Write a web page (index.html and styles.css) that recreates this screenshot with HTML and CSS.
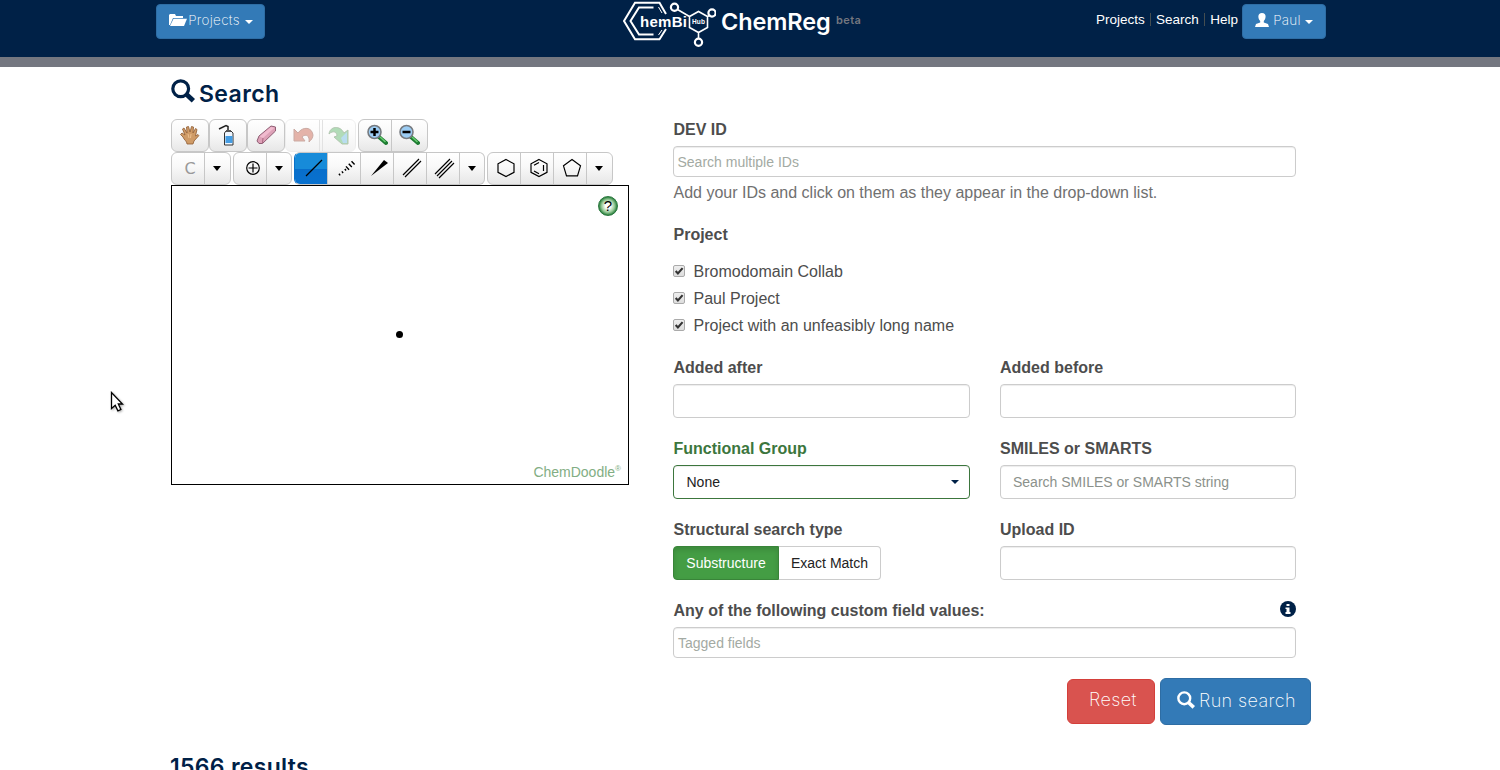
FILE: index.html
```html
<!DOCTYPE html>
<html lang="en">
<head>
<meta charset="utf-8">
<title>ChemReg Search</title>
<link rel="stylesheet" href="styles.css">
</head>
<body>
<svg class="defs" width="0" height="0">
  <defs>
    <symbol id="search" viewBox="0 0 24 24"><circle cx="9.7" cy="9.7" r="7.9" fill="none" stroke="currentColor" stroke-width="3.2"/><path d="M15 15l2-1.500 7 6.500-3.300 3.600-7-6.500z" fill="currentColor"/></symbol>
    <symbol id="lens" viewBox="0 0 22 22"><path d="M13 13l7 6" stroke="#1e7c32" stroke-width="4" stroke-linecap="round"/><path d="M14 13l5.500 5" stroke="#68cc70" stroke-width="1.500"/><circle cx="8.500" cy="8" r="6.500" fill="#9ccdf4" stroke="#777b80" stroke-width="1.600"/></symbol>
  </defs>
</svg>
<header class="header">
  <div class="header-inner">
    <button class="btn btn-projects"><svg class="folder" viewBox="0 0 18 14"><path d="M0 12V2l1-1h5l1 2h7v2H4L1 12z" fill="#fff"/><path d="M4.500 5.800H18L15 13H1z" fill="#fff"/></svg><span>Projects</span><i class="caret"></i></button>
    <div class="brand">
      <svg class="logo" viewBox="0 0 94 48" fill="none" stroke="#fff">
        <path d="M44 14L37.500 2.800H13L2 21l11 18.200h24.500L44 29" stroke-width="2"/>
        <path d="M31.500 7.500H17L8.500 21 17 34.500h14.500" stroke-width="2"/>
        <path d="M36.500 7l3.500 6M40 30l-3.500 5" stroke-width="1"/>
        <path d="M55.500 9.500L67.500 16.500v11l9 5 9-5v-11l-9-5-9 5M85.500 16.500l3-1.500M76.500 32.500v6" stroke-width="1.600"/>
        <circle cx="52.500" cy="7.300" r="3.600" stroke-width="2.200"/><circle cx="90" cy="13" r="3.600" stroke-width="2.200"/><circle cx="76.500" cy="42.300" r="3.600" stroke-width="2.200"/>
        <text class="logo-main" x="18" y="27" textLength="47">hemBi</text><text class="logo-hub" x="70" y="24" textLength="13">Hub</text>
      </svg>
      <span class="brand-name">ChemReg</span><span class="beta">beta</span>
    </div>
    <nav class="nav"><a>Projects</a><a>Search</a><a>Help</a></nav>
    <button class="btn btn-user"><svg class="person" viewBox="0 0 14 14"><path d="M7 0c5 0 4 6 1.800 8v1.500L13 11l1 3H0l1-3 4.200-1.500V8C3 6 2 0 7 0z" fill="#fff"/></svg><span>Paul</span><i class="caret"></i></button>
  </div>
</header>

<main class="page">
  <section class="sketch-column">
    <h1 class="title"><svg class="title-icon"><use href="#search"/></svg><span>Search</span></h1>
    <div class="toolbar toolbar-top">
      <div class="tools"><div class="tool w36"><svg width="22" height="22" viewBox="0 0 22 22"><path d="M8 20c0-3-3-4-4-7l-2.500-2.500L3 9l3 2-2.500-6L5 4l3 5-.500-6 2-.500L11 8l1.500-5.500 2 .500L14 9l2.500-4.500L18 5.500 16.500 12l2.500-1.500.800 1.200L15 17l-1 3z" fill="#cf9b67" stroke="#8e5b31" stroke-width=".8"/><path d="M9 10l1 4M12 10l-.5 4" stroke="#edc08e"/></svg></div></div>
      <div class="tools"><div class="tool w36"><svg class="bottle" width="22" height="22" viewBox="0 0 22 22"><path d="M1 5l7-3.500 2 1V7" fill="none" stroke="#222" stroke-width="1.500"/><path d="M8 7h5l2 2v12H6.500V9z" fill="#eef6ff" stroke="#333"/><path d="M7.500 12h7v7h-7z" fill="#459de3"/><path d="M8 7h5" stroke="#555" stroke-width="2"/></svg></div></div>
      <div class="tools"><div class="tool w36"><svg width="22" height="22" viewBox="0 0 22 22"><path d="M2 17l2-5L16 2l4.500 1v4L7.500 19.500H4z" fill="#dda1b7" stroke="#8f5e74"/><path d="M4.500 12.500L16 3l3.500.700L8 14z" fill="#f1bbcf"/><path d="M8 14l-.500 5" stroke="#aa6680"/></svg></div></div>
      <div class="tools disabled"><div class="tool w33"><svg width="22" height="22" viewBox="0 0 22 22"><path d="M2 5l4 4c5-7 14-6 15 2 0 3-2 5-4 7 1-6-3-9-7-5l3 4H2z" fill="#ca6a55" stroke="#97584a"/></svg></div><div class="tool w36"><svg width="22" height="22" viewBox="0 0 22 22"><path d="M20 6l-4 3C12 1 2 2 1 10c4-4 8-2 8 2l-3 1 8 7h6z" fill="#66b872" stroke="#668d62"/><path d="M13 14l6-6v11h-4z" fill="#76bce0"/></svg></div></div>
      <div class="tools"><div class="tool w32"><svg class="zoom-in" width="22" height="22" viewBox="0 0 22 22"><use href="#lens"/><path d="M4.500 8h8M8.500 4v8" stroke="#000" stroke-width="2.500"/></svg></div><div class="tool w36"><svg class="zoom-out" width="22" height="22" viewBox="0 0 22 22"><use href="#lens"/><path d="M4.500 8h8" stroke="#000" stroke-width="2.500"/></svg></div></div>
    </div>
    <div class="toolbar toolbar-bottom">
      <div class="tools"><div class="tool w32 element">C</div><div class="tool w26"><i class="tool-caret"></i></div></div>
      <div class="tools"><div class="tool w32 plus"><svg width="20" height="20" viewBox="0 0 20 20"><circle cx="10" cy="10" r="6.300"/><path d="M5.500 10h9M10 5.500v9"/></svg></div><div class="tool w25"><i class="tool-caret"></i></div></div>
      <div class="tools bonds"><div class="tool w32 selected"><svg class="off" width="22" height="22"><path d="M3 19L19 3"/></svg></div><div class="tool w33"><svg class="off" width="22" height="22"><path class="dash" d="M3 18L11 11.500"/><path class="dash thick" d="M11 11.500L19 4"/></svg></div><div class="tool w33"><svg class="off" width="22" height="22"><path class="fill" d="M2 19L15 3l4 3z"/></svg></div><div class="tool w33"><svg class="double" width="22" height="22"><path d="M2 18L18 2M4 20L20 4"/></svg></div><div class="tool w33"><svg class="double" width="22" height="22"><path d="M1 17L16 2M3 19L18 4M5 21L20 6"/></svg></div><div class="tool w25"><i class="tool-caret"></i></div></div>
      <div class="tools rings"><div class="tool w32"><svg class="ring" width="22" height="22"><path d="M11 2.500l8 4.300v8.600L11 19.500l-8-4.100V6.800z"/></svg></div><div class="tool w33"><svg class="ring" width="22" height="22"><path d="M11 2.500l8 4.300v8.600L11 19.500l-8-4.100V6.800zM6 8.300l5-2.800M15.500 8v6M11 16.700l-5-2.800"/></svg></div><div class="tool w33"><svg class="ring" width="22" height="22"><path d="M11 2.500l8.500 6.300-3 10h-11l-3-10z"/></svg></div><div class="tool w26"><i class="tool-caret"></i></div></div>
    </div>
    <div class="canvas"><span class="help-icon">?</span><i class="atom"></i><span class="credit">ChemDoodle<sup>®</sup></span></div>
    <h2 class="results">1566 results</h2>
  </section>

  <section class="form">
    <label class="label">DEV ID</label>
    <div class="input short">Search multiple IDs</div>
    <p class="hint">Add your IDs and click on them as they appear in the drop-down list.</p>
    <div class="label">Project</div>
    <div class="checks">
      <label><i class="check"><svg viewBox="0 0 12 12"><path d="M2 6l2.700 3L10.300 2.500"/></svg></i>Bromodomain Collab</label>
      <label><i class="check"><svg viewBox="0 0 12 12"><path d="M2 6l2.700 3L10.300 2.500"/></svg></i>Paul Project</label>
      <label><i class="check"><svg viewBox="0 0 12 12"><path d="M2 6l2.700 3L10.300 2.500"/></svg></i>Project with an unfeasibly long name</label>
    </div>
    <div class="grid">
      <div><div class="label">Added after</div><div class="input"></div></div>
      <div><div class="label">Added before</div><div class="input"></div></div>
      <div><div class="label green">Functional Group</div><div class="input select">None<i class="caret"></i></div></div>
      <div><div class="label">SMILES or SMARTS</div><div class="input smiles">Search SMILES or SMARTS string</div></div>
      <div><div class="label">Structural search type</div><div class="toggle"><span class="on">Substructure</span><span>Exact Match</span></div></div>
      <div><div class="label">Upload ID</div><div class="input"></div></div>
    </div>
    <div class="label custom">Any of the following custom field values:<svg class="info" viewBox="0 0 16 16"><circle cx="8" cy="8" r="8" fill="#002147"/><path d="M6.500 3h3v2h-3zM5.500 6.500h4V11h1v2h-5v-2h1V8h-1z" fill="#fff"/></svg></div>
    <div class="input short tagged">Tagged fields</div>
    <div class="actions"><button class="btn reset">Reset</button><button class="btn run"><svg><use href="#search"/></svg><span>Run search</span></button></div>
  </section>
</main>
<svg class="cursor" width="16" height="23" viewBox="0 0 16 23"><path d="M1.500 1.500v16l3.700-3.300 2.700 5.700 3-1.400-2.600-5.500h4.200z" fill="#fff" stroke="#000" stroke-width="1.300"/></svg>
</body>
</html>
```
FILE: styles.css
```css
* { box-sizing: border-box; }
body { margin: 0; height: 770px; overflow: hidden; position: relative; background: #fff; color: #4d4d4d; font: 16px/22px "Liberation Sans", Arial, sans-serif; }
.defs { position: absolute; }
i { font-style: normal; }
.header { height: 67px; background: #002147; border-bottom: 10px solid #747780; }
.header-inner { width: 1170px; margin-left: 156px; display: flex; align-items: flex-start; }
.btn { display: flex; align-items: center; border: 1px solid #2e6da4; border-radius: 4px; background: #337ab7; color: #fff; font-family: Inter, sans-serif; font-weight: 200; white-space: nowrap; padding: 0; }
.btn-projects { width: 109px; height: 35px; margin-top: 4px; padding-left: 12px; font-size: 13.500px; letter-spacing: .3px; }
.btn-projects span { flex: none; width: 54px; }
.folder { flex: none; width: 18px; height: 14px; margin-top: -3px; }
.btn-projects span, .btn-user span { margin-top: -3px; }
.caret { border: 4px solid transparent; border-top-color: currentColor; border-bottom: 0; margin-left: 4px; margin-top: 1px; }
.brand { display: flex; margin-left: 356px; width: 240px; height: 57px; color: #fff; }
.logo { width: 94px; height: 48px; flex: none; }
.logo text { fill: #fff; stroke: none; font-family: "Liberation Sans", sans-serif; font-weight: bold; }
.logo-main { font-size: 15px; }
.logo-hub { font-size: 6.500px; }
.brand-name { flex: none; width: 109px; margin-left: 5px; margin-top: 8px; font: 600 23.500px/28px Inter, sans-serif; letter-spacing: -.1px; }
.beta { margin-left: 6px; margin-top: 12px; font: 600 11px/16px Inter, sans-serif; letter-spacing: .4px; color: #74777f; }
.nav { display: flex; flex: none; margin-left: 235px; margin-top: 13px; font-size: 13.500px; line-height: 13px; color: #fff; width: 146px; white-space: nowrap; }
.brand { margin-left: 357px; width: 239px; }
.nav a + a { border-left: 1px solid #444d50; margin-left: 5px; padding-left: 5.300px; }
.btn-user { width: 84px; height: 35px; margin-top: 4px; padding-left: 12px; font-size: 13.500px; letter-spacing: .2px; }
.btn-user span { width: 28px; }
.btn-user .caret { margin-left: 4px; }
.person { width: 14px; height: 14px; margin-top: -4px; margin-right: 4px; }

.page { display: flex; align-items: flex-start; padding-left: 171px; }
.sketch-column { width: 458px; margin-right: 44px; }
.title { display: flex; height: 52px; margin: 0; padding-top: 12px; color: #002147; font: 600 23px/30px Inter, sans-serif; letter-spacing: .4px; }
.title-icon { width: 24px; height: 24px; margin-right: 4px; }
.toolbar { display: flex; height: 33px; }
.toolbar-top .disabled + .tools { margin-left: 2px; }
.toolbar-bottom { gap: 2px; }
.tools { display: flex; border: 1px solid #c7c7c7; border-radius: 6px; background: linear-gradient(#fff, #f8f8f8 45%, #e7e7e7); overflow: hidden; flex: none; }
.tool { display: flex; align-items: center; justify-content: center; }
.tool svg { margin-bottom: 1px; }
.tool + .tool { border-left: 1px solid #c7c7c7; }
.w36 { width: 36px; } .w33 { width: 33px; } .w32 { width: 32px; } .w26 { width: 26px; } .w25 { width: 25px; }
.disabled { opacity: .5; border-color: #ddd; }
.disabled .tool + .tool { border-left: 4px double #c7c7c7; }
.bottle { margin-left: 2px; }
.zoom-in { margin-left: 3px; }
.zoom-out { margin-right: 2px; }
.element { color: #999; font: 16px "DejaVu Sans", sans-serif; padding-left: 4px; }
.tool-caret { border: 4px solid transparent; border-top: 5px solid #000; border-bottom: 0; margin-right: 1px; }
.bonds svg, .rings svg, .plus svg { fill: none; stroke: #000; stroke-width: 1.200; }
.plus { padding-left: 5px; }
.bonds { border-left-color: #0871c9; }
.off { margin-left: 6px; }
.double { margin-left: 4px; }
.ring { margin-left: 4px; }
.selected { background: linear-gradient(#178bd9 50%, #086ecb 50%, #0871cf); }
.bonds .dash { stroke-dasharray: 1.400 2.400; stroke-width: 2; }
.bonds .dash.thick { stroke-width: 4.500; }
.bonds .fill { fill: #000; stroke: none; }
.canvas { position: relative; height: 300px; border: 1px solid #000; }
.help-icon { position: absolute; right: 10px; top: 10px; width: 20px; height: 20px; border-radius: 50%; border: 1px solid #28763c; background: radial-gradient(#fff 20%, #98ca98 50%, #287f3c 72%); color: #000; font-size: 15px; line-height: 18px; text-align: center; }
.atom { position: absolute; width: 7px; height: 7px; left: 224px; top: 145px; background: #000; border-radius: 50%; }
.credit { position: absolute; right: 7px; bottom: 2px; color: #82ae84; font-size: 14px; line-height: 19px; }
.credit sup { font-size: 8px; line-height: 0; vertical-align: 6px; }
.results { margin: 268px 0 0 -1px; color: #002147; font: 600 23px/28px Inter, sans-serif; letter-spacing: .3px; }

.form { width: 638px; padding-top: 51px; }
.label { display: block; height: 22px; line-height: 24px; margin-bottom: 6px; padding-left: .5px; font-weight: bold; }
.green { color: #3c763d; }
.input { width: 100%; height: 34px; border: 1px solid #ccc; border-radius: 4px; padding: 0 12px; font-size: 14px; line-height: 32px; box-shadow: inset 0 1px 1px rgba(0,0,0,.075); }
.short { width: 623px; height: 31px; line-height: 30px; padding: 0 3.500px; color: #a3aaa3; }
.tagged { line-height: 31px; padding-left: 4px; }
.hint { height: 22px; line-height: 24px; margin: 4px 0 20px; padding-left: .5px; color: #707070; }
.checks { margin: 13px 0 17px; }
.checks label { display: flex; align-items: center; height: 27px; }
.check { width: 12px; height: 12px; margin-right: 8.500px; margin-top: -1px; border: 1px solid #aaa; border-radius: 2px; background: linear-gradient(#eee, #ddd); display: flex; }
.check svg { width: 100%; fill: none; stroke: #333; stroke-width: 2.500; }
.grid { display: grid; width: 623px; grid-template-columns: 297px 296px; column-gap: 30px; row-gap: 19px; }
.grid > :nth-child(even) .label { padding-left: 0; }
.select { display: flex; justify-content: space-between; align-items: center; color: #222; border-color: #3c763d; padding-right: 10px; padding-left: 12.500px; }
.select .caret { color: #002147; margin-top: 0; }
.smiles { color: #8b918b; }
.toggle { display: flex; font-size: 14px; line-height: 32px; color: #222; }
.toggle span { width: 102px; height: 34px; border: 1px solid #ccc; border-left: 0; border-radius: 0 4px 4px 0; text-align: center; }
.toggle .on { width: 106px; border: 1px solid #398439; border-radius: 4px 0 0 4px; background: #449d44; color: #fff; box-shadow: inset 0 3px 5px rgba(0,0,0,.125); }
.custom { display: flex; justify-content: space-between; width: 623px; margin-top: 19px; }
.info { width: 16px; height: 16px; margin-top: 2px; }
.actions { display: flex; justify-content: flex-end; align-items: center; gap: 5px; margin-top: 20px; }
.reset, .run { border-radius: 6px; font-size: 18px; letter-spacing: .4px; }
.reset { width: 88px; height: 45px; padding: 0 0 4px 21px; background: #d9534f; border-color: #d43f3a; }
.run { width: 151px; height: 47px; padding-left: 16px; }
.run span { margin-top: -2px; }
.run svg { width: 18px; height: 18px; margin-right: 4px; margin-top: -4px; }
.cursor { position: absolute; left: 110px; top: 391px; filter: drop-shadow(1px 1px 1px #aaa); }
```
